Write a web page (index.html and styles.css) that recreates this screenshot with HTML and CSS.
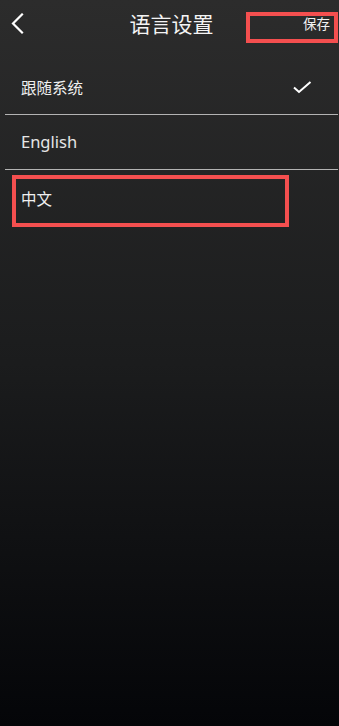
FILE: index.html
```html
<!DOCTYPE html>
<html lang="zh">
<head>
<meta charset="utf-8">
<title>语言设置</title>
<link rel="stylesheet" href="styles.css">
</head>
<body>
<div class="screen">
  <header class="topbar">
    <button class="back" aria-label="返回">
      <svg width="14" height="22" viewBox="0 0 14 22"><path d="M11 1.5 L2 10.5 L11 19.5" fill="none" stroke="#fff" stroke-width="2.2" stroke-linecap="square"/></svg>
    </button>
    <h1 class="title">语言设置</h1>
    <button class="save">保存</button>
  </header>
  <ul class="list">
    <li class="row">
      <span class="label">跟随系统</span>
      <svg class="check" width="19" height="13" viewBox="0 0 19 13"><path d="M1 6.5 L6 11 L17.5 1" fill="none" stroke="#fff" stroke-width="2"/></svg>
    </li>
    <li class="row"><span class="label en">English</span></li>
    <li class="row selected"><span class="label">中文</span></li>
  </ul>
</div>
</body>
</html>
```
FILE: styles.css
```css
* { box-sizing: border-box; }
html, body { margin: 0; padding: 0; }
body {
  width: 339px;
  height: 726px;
  background: linear-gradient(180deg, #2c2c2c 0%, #1b1c1d 50%, #040508 100%);
  font-family: "Noto Sans", "Noto Sans CJK SC", sans-serif;
  color: #f2f2f2;
  overflow: hidden;
}
.screen { height: 726px; }
.topbar {
  height: 60px;
  display: grid;
  grid-template-columns: 1fr auto 1fr;
  align-items: start;
}
.back {
  justify-self: start;
  background: none;
  border: 0;
  padding: 0;
  margin: 13px 0 0 11px;
  display: flex;
}
.title {
  margin: 8px 0 0 4px;
  font-size: 21px;
  font-weight: 400;
  line-height: 30px;
  color: #f4f4f4;
  font-family: "Noto Sans CJK SC", sans-serif;
}
.save {
  justify-self: end;
  margin: 12px 1px 0 0;
  width: 92px;
  height: 31px;
  border: 4px solid #f44f4f;
  background: none;
  color: #f2f2f2;
  font-family: "Noto Sans CJK SC", sans-serif;
  font-size: 13.5px;
  line-height: 14px;
  text-align: right;
  padding: 0 4px 0 0;
  display: flex;
  justify-content: flex-end;
  align-items: flex-start;
}
.list {
  list-style: none;
  margin: 0 1px 0 5px;
  padding: 0;
}
.row {
  height: 55px;
  display: flex;
  align-items: center;
  justify-content: space-between;
  padding: 0 26px 0 16px;
  border-bottom: 1px solid #b3b3b3;
}
.label {
  font-size: 15.5px;
  line-height: 20px;
  color: #f0f0f0;
  font-family: "Noto Sans CJK SC", sans-serif;
}
.label.en {
  font-family: "Noto Sans", sans-serif;
  font-size: 16.5px;
  color: #e6e6e6;
}
.check { margin-top: 0; }
.row.selected {
  border: 4px solid #f44f4f;
  width: 277px;
  height: 52px;
  margin: 5px 0 0 7px;
  padding: 0 0 7px 5px;
}
```
